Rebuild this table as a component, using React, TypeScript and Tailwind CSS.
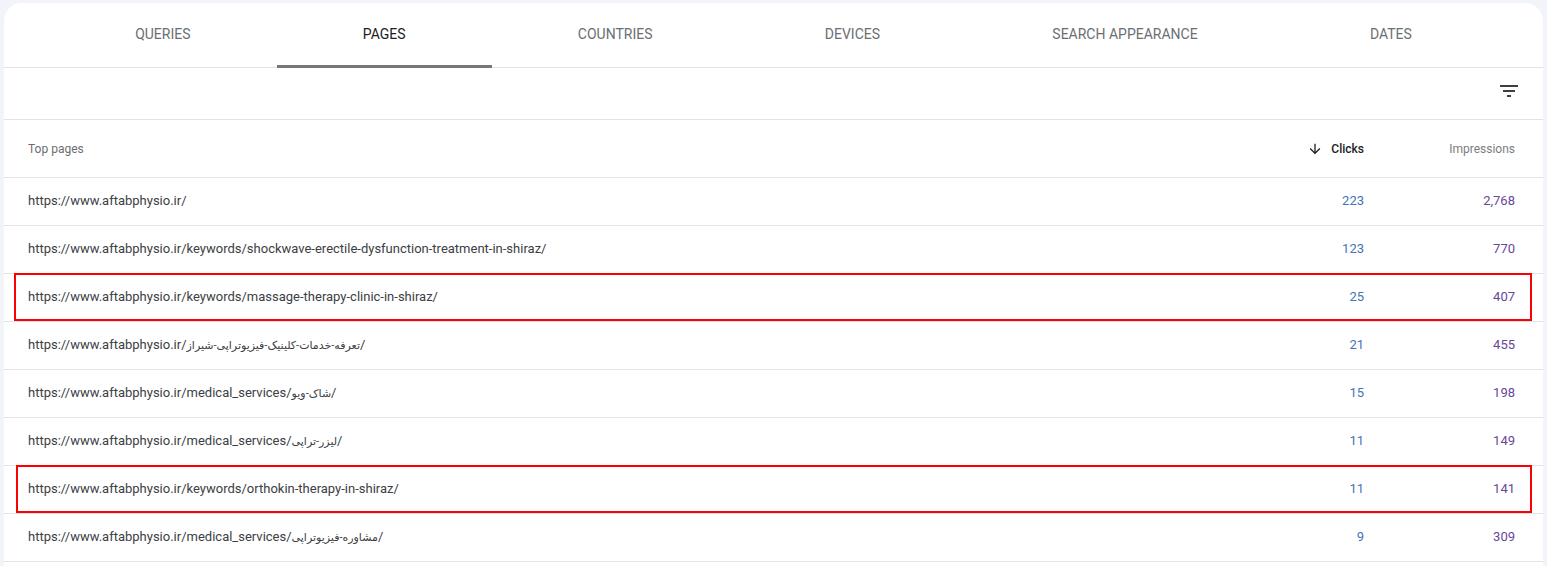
import React from "react";

const tabs = ["QUERIES", "PAGES", "COUNTRIES", "DEVICES", "SEARCH APPEARANCE", "DATES"];

type Row = { base: string; fa?: string; clicks: string; imps: string; box?: "a" | "b" };

const rows: Row[] = [
  { base: "https://www.aftabphysio.ir/", clicks: "223", imps: "2,768" },
  { base: "https://www.aftabphysio.ir/keywords/shockwave-erectile-dysfunction-treatment-in-shiraz/", clicks: "123", imps: "770" },
  { base: "https://www.aftabphysio.ir/keywords/massage-therapy-clinic-in-shiraz/", clicks: "25", imps: "407", box: "a" },
  { base: "https://www.aftabphysio.ir/", fa: "تعرفه-خدمات-کلینیک-فیزیوتراپی-شیراز", clicks: "21", imps: "455" },
  { base: "https://www.aftabphysio.ir/medical_services/", fa: "شاک-ویو", clicks: "15", imps: "198" },
  { base: "https://www.aftabphysio.ir/medical_services/", fa: "لیزر-تراپی", clicks: "11", imps: "149" },
  { base: "https://www.aftabphysio.ir/keywords/orthokin-therapy-in-shiraz/", clicks: "11", imps: "141", box: "b" },
  { base: "https://www.aftabphysio.ir/medical_services/", fa: "مشاوره-فیزیوتراپی", clicks: "9", imps: "309" },
];

export default function App() {
  return (
    <div
      className="min-h-screen bg-[#f1f4f9] pt-[3px] px-[4px]"
      style={{ fontFamily: "Roboto, 'DejaVu Sans', sans-serif" }}
    >
      <div className="bg-white rounded-t-[18px] min-h-[563px]">
        {/* Tabs */}
        <div className="flex h-[65px] px-[45px] border-b border-[#e3e3e3]">
          {tabs.map((t) => (
            <div
              key={t}
              className={
                "relative flex-auto flex items-center justify-center pb-[2px] text-[14px] " +
                (t === "PAGES" ? "text-[#202124]" : "text-[#6b6e73]")
              }
            >
              {t}
              {t === "PAGES" && (
                <div className="absolute left-0 right-0 bottom-[-1px] h-[3px] bg-[#777777]" />
              )}
            </div>
          ))}
        </div>

        {/* Toolbar */}
        <div className="flex h-[52px] items-center justify-end pr-[22px] pb-[6px] border-b border-[#e3e3e3]">
          <svg width="24" height="24" viewBox="0 0 24 24" fill="#3c4043">
            <path d="M10 18h4v-2h-4v2zM3 6v2h18V6H3zm3 7h12v-2H6v2z" />
          </svg>
        </div>

        {/* Header */}
        <div className="grid grid-cols-[1fr_140px_151px] items-center h-[58px] pl-[24px] pr-[28px] border-b border-[#e3e3e3] text-[12px]">
          <div className="text-[#6b6e73]">Top pages</div>
          <div className="flex items-center justify-end gap-[8px] text-[#202124] font-medium">
            <svg width="16" height="16" viewBox="0 0 24 24" fill="#202124">
              <path d="M20 12l-1.41-1.41L13 16.17V4h-2v12.17l-5.58-5.59L4 12l8 8 8-8z" />
            </svg>
            <span>Clicks</span>
          </div>
          <div className="text-right text-[#7a7d82]">Impressions</div>
        </div>

        {/* Rows */}
        {rows.map((r, i) => (
          <div
            key={i}
            className="relative grid grid-cols-[1fr_140px_151px] items-center h-[48px] pl-[24px] pr-[28px] pb-[2px] border-b border-[#e3e3e3] text-[13px]"
          >
            <div className="text-[#3c4043] truncate">
              {r.base}
              {r.fa && (
                <>
                  <span className="text-[11px]">{r.fa}</span>/
                </>
              )}
            </div>
            <div className="text-right text-[#3f74b8]">{r.clicks}</div>
            <div className="text-right text-[#67469a]">{r.imps}</div>
            {r.box === "a" && (
              <div className="absolute top-[-1px] left-[10px] right-[11px] h-[48px] border-2 border-[#ff0000] pointer-events-none" />
            )}
            {r.box === "b" && (
              <div className="absolute top-[-1px] left-[12px] right-[11px] h-[48px] border-2 border-[#ff0000] pointer-events-none" />
            )}
          </div>
        ))}
      </div>
    </div>
  );
}
